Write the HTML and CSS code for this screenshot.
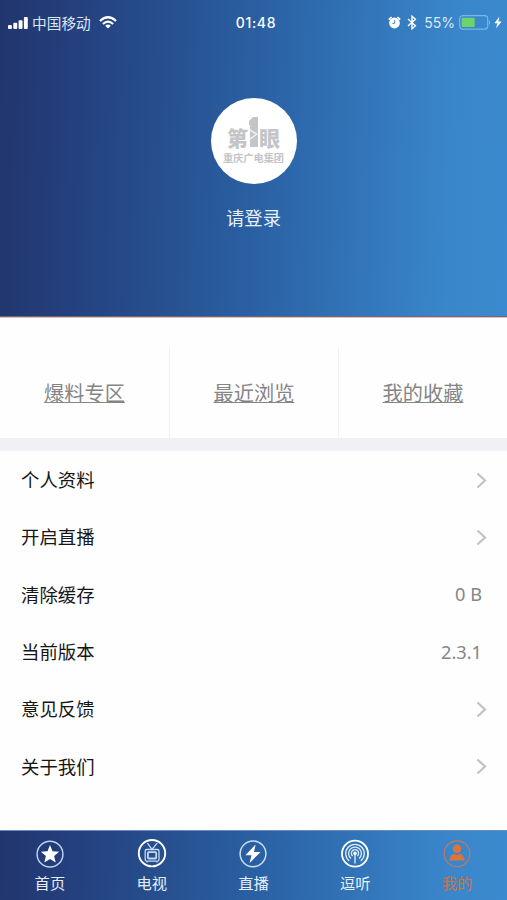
FILE: index.html
```html
<!DOCTYPE html>
<html lang="zh-CN">
<head>
<meta charset="utf-8">
<title>我的</title>
<link rel="stylesheet" href="styles.css">
</head>
<body>
<div class="app">
  <header class="header">
    <div class="status">
      <div class="status-left">
        <svg class="signal" width="20" height="12" viewBox="0 0 20 12"><rect x="0" y="8" width="3.9" height="4" rx="1"/><rect x="5.3" y="5.8" width="3.9" height="6.2" rx="1"/><rect x="10.6" y="3.2" width="3.9" height="8.8" rx="1"/><rect x="15.9" y="0" width="3.9" height="12" rx="1"/></svg>
        <span class="carrier">中国移动</span>
        <svg class="wifi" width="18" height="13" viewBox="0 0 18 13" fill="none" stroke="#fff" stroke-width="2.2"><path d="M1 5Q9-2.5 17 5M3.9 8Q9 3.2 14.1 8"/><path d="M9 12.6 6.2 9.8Q9 7.4 11.8 9.8Z" fill="#fff" stroke="none"/></svg>
      </div>
      <time class="clock">01:48</time>
      <div class="status-right">
        <svg class="alarm" width="13" height="13" viewBox="0 0 13 13"><circle cx="6.5" cy="7" r="5.4" fill="#fff"/><path d="M.8 3.6 3.6 1M12.2 3.6 9.4 1" stroke="#fff" stroke-width="1.7"/><path d="M6.7 4v3.3H4.4" fill="none" stroke="#2f6fb4" stroke-width=".9"/></svg>
        <svg class="bluetooth" width="10" height="15" viewBox="0 0 10 15" fill="none" stroke="#fff" stroke-width="1.4"><path d="M1 4 8.4 10.8 5 13.8V1.2L8.4 4.2 1 11"/></svg>
        <span class="percent">55%</span>
        <svg class="battery" width="33" height="15" viewBox="0 0 33 15"><rect x=".7" y=".7" width="28" height="13.4" rx="3" fill="none" stroke="#76b6ea" stroke-width="1.2"/><rect x="2.7" y="2.7" width="13" height="9.4" rx="1" fill="#6fd36b"/><path d="M30 4.9q2.4 2.5 0 5z" fill="#76b6ea"/></svg>
        <svg class="charge" width="8" height="13" viewBox="0 0 8 13"><path d="M5.5.5.4 7.2h3L2 12.5 7.6 5.5H4.4Z" fill="#fff"/></svg>
      </div>
    </div>
    <div class="avatar">
      <div class="logo-top"><span>第</span><svg width="9" height="30" viewBox="0 0 9 30"><path d="M0 4 4 0H9V30H1V8H0Z" fill="#c3c5c7"/><path d="M1 12 9 17 1 23Z" fill="#fff" opacity=".75"/><path d="M1 14 6.5 17.3 1 21Z" fill="#c3c5c7"/></svg><span>眼</span></div>
      <div class="logo-name">重庆广电集团</div>
    </div>
    <a class="login">请登录</a>
  </header>

  <nav class="shortcuts">
    <a class="shortcut"><span>爆料专区</span></a>
    <a class="shortcut"><span>最近浏览</span></a>
    <a class="shortcut"><span>我的收藏</span></a>
  </nav>

  <main class="menu">
    <div class="row"><span>个人资料</span><svg class="chevron" viewBox="0 0 11 17"><path d="M1.5 1.5 9 8.5 1.5 15.5"/></svg></div>
    <div class="row"><span>开启直播</span><svg class="chevron" viewBox="0 0 11 17"><path d="M1.5 1.5 9 8.5 1.5 15.5"/></svg></div>
    <div class="row"><span>清除缓存</span><span class="value">0 B</span></div>
    <div class="row"><span>当前版本</span><span class="value">2.3.1</span></div>
    <div class="row"><span>意见反馈</span><svg class="chevron" viewBox="0 0 11 17"><path d="M1.5 1.5 9 8.5 1.5 15.5"/></svg></div>
    <div class="row"><span>关于我们</span><svg class="chevron" viewBox="0 0 11 17"><path d="M1.5 1.5 9 8.5 1.5 15.5"/></svg></div>
  </main>

  <nav class="tabbar">
    <a class="tab"><svg viewBox="0 0 30 30"><circle cx="15" cy="15.2" r="12.9" stroke="#b9d3f2"/><path d="M15 6 17.5 12.2 24.1 12.7 19.1 17 20.7 23.5 15 20 9.3 23.5 10.9 17 5.9 12.7 12.5 12.2Z" fill="#fff" stroke="none"/></svg><span>首页</span></a>
    <a class="tab"><svg viewBox="0 0 30 30"><circle cx="15" cy="14.2" r="13.2" stroke-width="1.9"/><g stroke="#c5daf4" stroke-width="1.3"><path d="M10.4 4.2 15 10.4 20.2 4.2M10 22.3v1.3M20 22.3v1.3"/><rect x="8.2" y="10.5" width="13.8" height="11.6" rx="1.5"/><rect x="10.9" y="13.1" width="8.3" height="6.4" rx="1" stroke-width="1.8"/></g></svg><span>电视</span></a>
    <a class="tab"><svg viewBox="0 0 30 30"><circle cx="15" cy="14.8" r="12.9" stroke="#c5def7"/><path d="M17.6 5.6 7.4 16.3h6.1L11.6 24 22.6 13H16Z" fill="#fff" stroke="none"/></svg><span>直播</span></a>
    <a class="tab"><svg viewBox="0 0 30 30"><circle cx="15" cy="14.7" r="13" stroke-width="1.8"/><g stroke="#dcecfb" stroke-width="1.35"><path d="M9.2 21.9A9.3 9.3 0 1 1 20.8 21.9M11 19.5A6.4 6.4 0 1 1 19 19.5M12.7 17A3.6 3.6 0 1 1 17.3 17M15 15v9.5"/></g><circle cx="15" cy="14.4" r="1.8" fill="#fff" stroke="none"/></svg><span>逗听</span></a>
    <a class="tab active"><svg viewBox="0 0 30 30"><circle cx="15" cy="14.8" r="12.9" stroke-width="1.1"/><circle cx="15" cy="9.7" r="4.3" fill="#dc7440" stroke="none"/><path d="M7.3 21.5Q8.4 15 12.5 14.8L15 16.3 17.5 14.8Q21.6 15 22.7 21.5Z" fill="#dc7440" stroke="none"/></svg><span>我的</span></a>
  </nav>
</div>
</body>
</html>
```

FILE: styles.css
```css
* { box-sizing: border-box; }
body {
  margin: 0;
  font-family: "Noto Sans CJK SC", sans-serif;
  background: #fefefe;
}
svg { display: block; flex: none; }
.app {
  width: 507px;
  height: 900px;
  display: flex;
  flex-direction: column;
  overflow: hidden;
}
.header, .tabbar {
  background: linear-gradient(92deg, #22356e 0%, #24417f 16%, #27508f 33%, #2a61a4 51%, #3173b6 69%, #3a86cb 88%, #3b89ce 100%);
}
.header {
  height: 318px;
  flex: none;
  display: flex;
  flex-direction: column;
  align-items: center;
  border-bottom: 1px solid #d3c4c4;
  box-shadow: inset 0 -1px #80626f;
}
.status {
  width: 100%;
  height: 46px;
  padding: 0 5px 0 8px;
  display: grid;
  grid-template-columns: 1fr auto 1fr;
  align-items: center;
  color: #fff;
}
.status-left, .status-right { display: flex; align-items: center; }
.status-right { justify-content: flex-end; }
.signal { fill: #fff; }
.carrier { font-size: 14.7px; line-height: 20px; margin: -1px 8px 0 4px; color: #dbe6f5; }
.wifi { margin-top: -1px; }
.clock { font: 500 14px/20px Inter, sans-serif; letter-spacing: .65px; margin-left: 2px; }
.alarm { margin-top: -1px; }
.bluetooth { margin: -1px 7px 0 6px; }
.percent { font: 14px/20px Inter, sans-serif; color: #d8eafb; margin-right: 4px; }
.battery { margin-top: -1px; }
.charge { margin-left: 2px; margin-top: -1px; }
.avatar {
  width: 86px;
  height: 86px;
  margin-top: 52px;
  border-radius: 50%;
  background: #fff;
  color: #c3c5c7;
  display: flex;
  flex-direction: column;
  align-items: center;
}
.logo-top {
  display: flex;
  align-items: flex-end;
  gap: 1px;
  height: 30px;
  margin-top: 19px;
  font-size: 21px;
  line-height: 20px;
  font-weight: 900;
}
.logo-name { font-size: 10.2px; line-height: 14px; font-weight: 700; margin-top: 4px; white-space: nowrap; }
.login { color: #e8f0fa; font-size: 18.3px; line-height: 28px; margin-top: 19px; }

.shortcuts {
  height: 133px;
  flex: none;
  display: grid;
  grid-template-columns: repeat(3, 1fr);
  padding-top: 29px;
  border-bottom: 13px solid #f1f1f5;
}
.shortcut {
  display: flex;
  justify-content: center;
  padding-top: 31px;
  font-size: 20.2px;
  line-height: 29px;
  color: #858585;
  text-decoration: underline;
  text-decoration-thickness: 1px;
  text-underline-offset: 1px;
}
.shortcut + .shortcut { border-left: 1px solid #f1f1f4; }

.menu { flex: 1; padding: 0 19px 0 21px; }
.row {
  height: 57.3px;
  display: flex;
  justify-content: space-between;
  align-items: center;
  font-size: 18.4px;
  line-height: 28px;
  color: #161616;
}
.row span:first-child { margin-top: -1px; }
.value { color: #858585; padding-right: 6px; font-family: "Noto Sans", sans-serif; font-size: 18.2px; }
.chevron { width: 11px; height: 17px; margin-right: 1px; margin-top: 1px; fill: none; stroke: #c3c3c3; stroke-width: 2.3; }

.tabbar {
  width: 509px;
  margin-left: -1px;
  height: 70px;
  flex: none;
  display: grid;
  grid-template-columns: repeat(5, 1fr);
  border-top: 1px solid #668bbc;
}
.tab {
  display: flex;
  flex-direction: column;
  align-items: center;
  padding-top: 8px;
  font-size: 15.3px;
  line-height: 22px;
  color: #e6eefa;
}
.tab svg { width: 30px; height: 30px; fill: none; stroke: #fff; stroke-width: 1.5; margin-bottom: 2px; }
.tab.active { color: #c9734f; }
.tab.active svg { stroke: #c37a5d; }
```
